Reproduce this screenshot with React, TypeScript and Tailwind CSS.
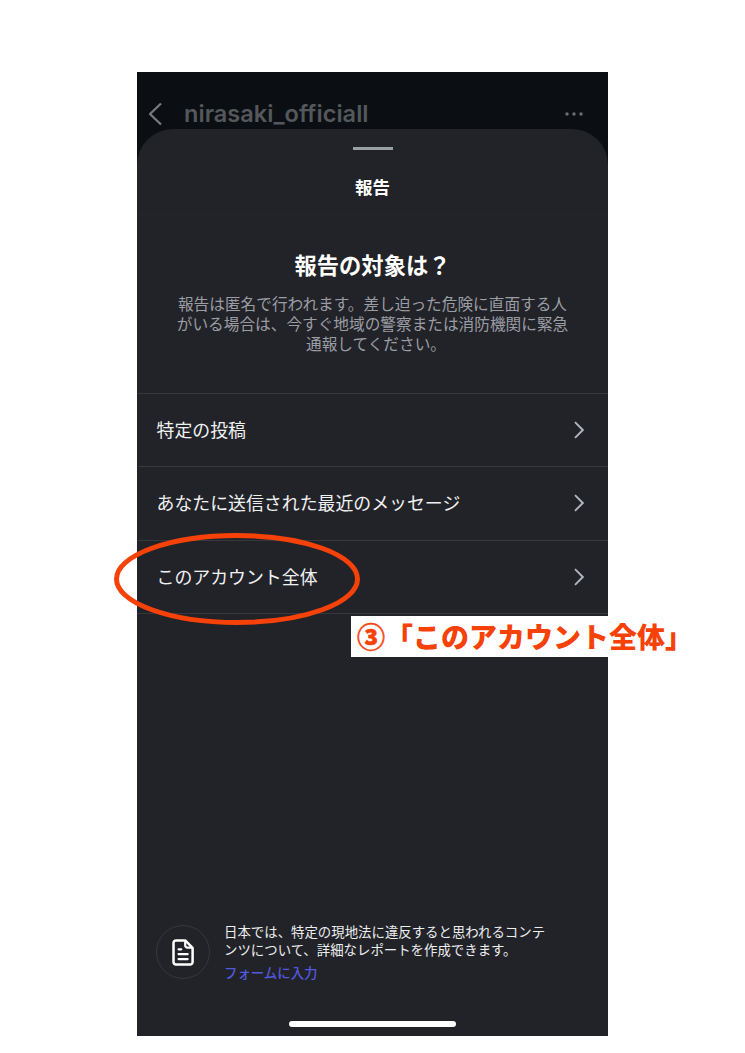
import { ReactNode } from 'react';

const options = [
  '特定の投稿',
  'あなたに送信された最近のメッセージ',
  'このアカウント全体',
];

function ProfileHeader() {
  return (
    <div className="flex h-[57px] items-start pt-[30px] pr-[25px] pl-[11px] text-[#54585c]">
      <svg width="15" height="24" viewBox="0 0 15 24" fill="none">
        <path
          d="M13 1.5 2 12 13 22.5"
          stroke="#777b7e"
          strokeWidth="2.3"
          strokeLinejoin="round"
        />
      </svg>
      <span className="ml-[21px] font-[Inter,sans-serif] text-[23.5px] leading-[24px] font-semibold tracking-[0.05px] [font-variant-ligatures:none]">
        nirasaki_officiall
      </span>
      <svg className="mt-[10px] ml-auto" width="18" height="4" fill="#6b6f72">
        <circle cx="2" cy="2" r="1.7" />
        <circle cx="9" cy="2" r="1.7" />
        <circle cx="16" cy="2" r="1.7" />
      </svg>
    </div>
  );
}

function OptionRow({ children }: { children: ReactNode }) {
  return (
    <div className="flex h-[73.3px] items-center justify-between border-t-[1.5px] border-[#36383d] pr-6 pl-[19.5px] text-[#f0f1f3]">
      <span className="pb-[2px] text-[17.9px] leading-6">{children}</span>
      <svg width="10" height="18" viewBox="0 0 10 18" fill="none">
        <path d="M1 1.2 8.8 9 1 16.8" stroke="#b1b5bb" strokeWidth="1.9" />
      </svg>
    </div>
  );
}

function ReportForm() {
  return (
    <div className="flex pl-[19px]">
      <div className="mt-[3px] flex h-[54px] w-[54px] items-center justify-center rounded-full border border-[#36383d]">
        <svg width="22" height="27" viewBox="0 0 22 27" fill="none">
          <path
            d="M4 1.4h9.2l7.4 7.4v14.3a2.5 2.5 0 0 1-2.5 2.5H4a2.5 2.5 0 0 1-2.5-2.5V3.9A2.5 2.5 0 0 1 4 1.4Z"
            stroke="white"
            strokeWidth="2.5"
            strokeLinejoin="round"
          />
          <path
            d="M13.2 1.8v4.7a2.2 2.2 0 0 0 2.2 2.2h4.8"
            stroke="white"
            strokeWidth="2.2"
          />
          <path
            d="M6.6 10.3h2.6M6.6 15.2h9M6.6 20.1h9"
            stroke="white"
            strokeWidth="2.3"
            strokeLinecap="round"
          />
        </svg>
      </div>
      <div className="ml-[14px] text-[13.42px] leading-[18px] text-[#eceef0]">
        <p className="whitespace-nowrap">
          日本では、特定の現地法に違反すると思われるコンテ
          <br />
          ンツについて、詳細なレポートを作成できます。
        </p>
        <p className="mt-[5px] font-medium text-[#5059df]">フォームに入力</p>
      </div>
    </div>
  );
}

export default function App() {
  return (
    <div className="relative h-[1053px] w-[745px] overflow-hidden bg-white pt-[72px] pl-[137px] font-['Noto_Sans_CJK_JP',sans-serif]">
      <div className="flex h-[964px] w-[471px] flex-col bg-[#0b0f13]">
        <ProfileHeader />
        <div className="flex min-h-0 flex-1 flex-col rounded-t-[36px] bg-[#222328]">
          <div className="flex h-[86px] flex-col items-center border-b border-[#25262b] pt-[18px]">
            <div className="h-[2.5px] w-10 bg-[#9a9fa2]" />
            <h1 className="mt-[25px] text-[17.5px] leading-6 font-bold text-white">
              報告
            </h1>
          </div>
          <div className="h-[178px] pt-[33px] text-center">
            <h2 className="text-[22.3px] leading-8 font-bold text-white">
              報告の対象は？
            </h2>
            <div className="mt-[14px] text-[15.67px] leading-[20px] whitespace-nowrap text-[#9b9da4]">
              <p>報告は匿名で行われます。差し迫った危険に直面する人</p>
              <p>がいる場合は、今すぐ地域の警察または消防機関に緊急</p>
              <p className="pl-[7px]">通報してください。</p>
            </div>
          </div>
          <div className="border-b-[1.5px] border-[#36383d]">
            {options.map((option) => (
              <OptionRow key={option}>{option}</OptionRow>
            ))}
          </div>
          <div className="mt-auto">
            <ReportForm />
            <div className="mx-auto mt-[40px] mb-[9px] h-[6px] w-[167px] rounded-full bg-white" />
          </div>
        </div>
      </div>

      <svg
        className="absolute top-[530px] left-[112px]"
        width="250"
        height="98"
        fill="none"
      >
        <ellipse
          cx="125"
          cy="49"
          rx="120.5"
          ry="43.5"
          stroke="#f64108"
          strokeWidth="5"
        />
      </svg>
      <div className="absolute top-[616px] left-[351px] flex h-[41px] w-[349px] items-center bg-white pl-[6px] text-[28px] leading-[41px] font-black whitespace-nowrap text-[#f64108]">
        <span className="[-webkit-text-stroke:0.5px_#f64108]">③</span>
        <span>「このアカウント全体」</span>
      </div>
    </div>
  );
}
